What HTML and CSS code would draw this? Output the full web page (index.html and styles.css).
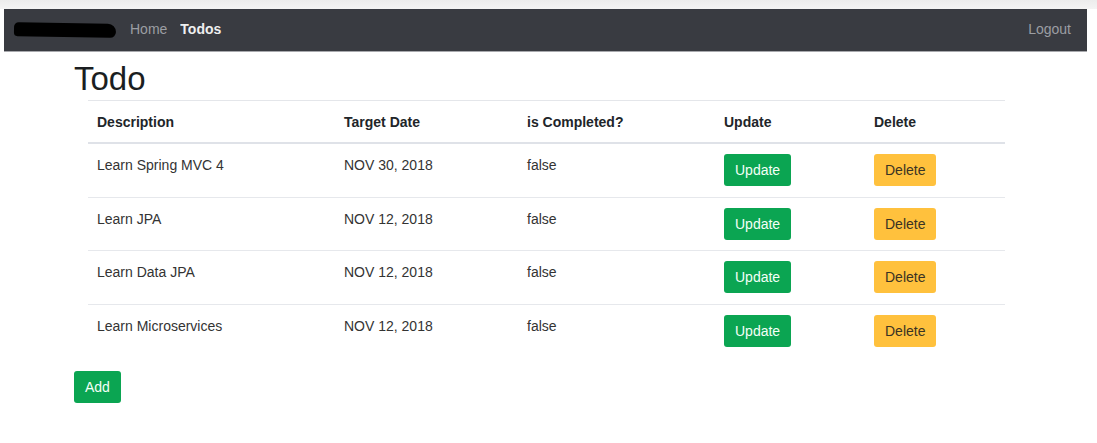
FILE: index.html
```html
<!DOCTYPE html>
<html>
<head>
<meta charset="utf-8">
<link rel="stylesheet" href="styles.css">
</head>
<body>
<div class="frame">
  <nav class="navbar">
    <div class="nav-left">
      <span class="brand"></span>
      <a class="nav-link">Home</a>
      <a class="nav-link active">Todos</a>
    </div>
    <a class="nav-link logout">Logout</a>
  </nav>
</div>
<main class="container">
  <h1 class="title">Todo</h1>
  <table class="todo-table">
    <thead>
      <tr>
        <th class="c1">Description</th>
        <th class="c2">Target Date</th>
        <th class="c3">is Completed?</th>
        <th class="c4">Update</th>
        <th class="c5">Delete</th>
      </tr>
    </thead>
    <tbody>
      <tr>
        <td class="text">Learn Spring MVC 4</td>
        <td class="text">NOV 30, 2018</td>
        <td class="text">false</td>
        <td><span class="btn btn-success">Update</span></td>
        <td><span class="btn btn-warning">Delete</span></td>
      </tr>
      <tr>
        <td class="text">Learn JPA</td>
        <td class="text">NOV 12, 2018</td>
        <td class="text">false</td>
        <td><span class="btn btn-success">Update</span></td>
        <td><span class="btn btn-warning">Delete</span></td>
      </tr>
      <tr>
        <td class="text">Learn Data JPA</td>
        <td class="text">NOV 12, 2018</td>
        <td class="text">false</td>
        <td><span class="btn btn-success">Update</span></td>
        <td><span class="btn btn-warning">Delete</span></td>
      </tr>
      <tr>
        <td class="text">Learn Microservices</td>
        <td class="text">NOV 12, 2018</td>
        <td class="text">false</td>
        <td><span class="btn btn-success">Update</span></td>
        <td><span class="btn btn-warning">Delete</span></td>
      </tr>
    </tbody>
  </table>
  <div class="actions"><span class="btn btn-success">Add</span></div>
</main>
</body>
</html>
```
FILE: styles.css
```css
html, body {
  margin: 0;
  padding: 0;
  background: #ffffff;
  font-family: "Liberation Sans", Arial, sans-serif;
  color: #212529;
}

.frame {
  padding: 9px 10px 0 4px;
  background: linear-gradient(#ececec 0, #f4f4f4 9px, #ffffff 9px);
}

.navbar {
  height: 42px;
  background: #393b41;
  border-bottom: 1px solid #a8a9ad;
  display: flex;
  align-items: center;
  justify-content: space-between;
  padding: 0 16px 0 10px;
  line-height: 20px;
}

.nav-left {
  display: flex;
  align-items: center;
}

.brand {
  display: inline-block;
  width: 102px;
  height: 14px;
  background: #000;
  border-radius: 8px 14px 10px 6px;
  margin-right: 14px;
  transform: rotate(1deg);
}

.nav-link {
  font-size: 14px;
  color: #9c9ea3;
  margin-right: 13px;
  position: relative;
  top: -1px;
}

.nav-link.active {
  color: #ffffff;
  font-weight: bold;
  opacity: 0.92;
}

.nav-link.logout {
  margin-right: 0;
}

.container {
  padding: 0 0 0 74px;
}

.title {
  margin: 6px 0 0 0;
  font-size: 33px;
  font-weight: normal;
  line-height: 42px;
  color: #1b1e21;
}

.todo-table {
  margin-left: 14px;
  width: 917px;
  border-collapse: collapse;
  font-size: 14px;
  color: #333;
}

.todo-table th {
  text-align: left;
  font-weight: bold;
  color: #212529;
  padding: 11px 9px 9px;
  line-height: 21px;
  border-top: 1px solid #e4e6ea;
  border-bottom: 2px solid #dfe2e8;
}

.c1 { width: 229px; }
.c2 { width: 165px; }
.c3 { width: 179px; }
.c4 { width: 132px; }

.todo-table td {
  padding: 10px 9px 10.5px;
  line-height: 21px;
  vertical-align: top;
  border-top: 1px solid #e6e8ec;
}

.todo-table td.text {
  padding-top: 11px;
}

.todo-table tbody tr:first-child td {
  border-top: none;
}

.btn {
  display: inline-block;
  height: 32px;
  line-height: 32px;
  padding: 0 11px;
  border-radius: 3px;
  font-size: 14px;
  vertical-align: top;
}

.btn-success {
  background: #0ba552;
  color: #f4fff7;
}

.btn-warning {
  background: #ffc13d;
  color: #3a3324;
}

.actions {
  margin-top: 14px;
}
```
